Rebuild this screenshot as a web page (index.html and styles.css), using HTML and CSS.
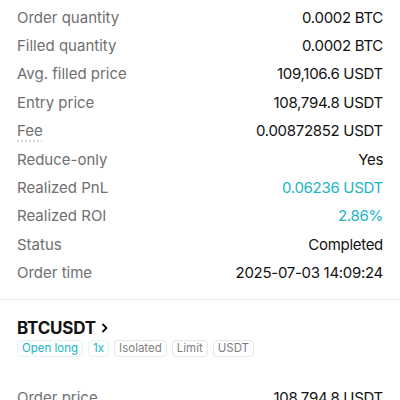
FILE: index.html
```html
<!DOCTYPE html>
<html>
<head>
<meta charset="utf-8">
<link rel="stylesheet" href="styles.css">
</head>
<body>
<div class="page">
  <section class="details">
    <div class="row"><span class="label">Order quantity</span><span class="value">0.0002 BTC</span></div>
    <div class="row"><span class="label">Filled quantity</span><span class="value">0.0002 BTC</span></div>
    <div class="row"><span class="label">Avg. filled price</span><span class="value">109,106.6 USDT</span></div>
    <div class="row"><span class="label">Entry price</span><span class="value">108,794.8 USDT</span></div>
    <div class="row"><span class="label dotted">Fee</span><span class="value">0.00872852 USDT</span></div>
    <div class="row"><span class="label">Reduce-only</span><span class="value">Yes</span></div>
    <div class="row"><span class="label">Realized PnL</span><span class="value up">0.06236 USDT</span></div>
    <div class="row"><span class="label">Realized ROI</span><span class="value up">2.86%</span></div>
    <div class="row"><span class="label">Status</span><span class="value">Completed</span></div>
    <div class="row"><span class="label">Order time</span><span class="value">2025-07-03 14:09:24</span></div>
  </section>
  <section class="order">
    <div class="title">BTCUSDT
      <svg class="chev" width="8" height="10" viewBox="0 0 8 10"><path d="M2 1.5 L5.5 5 L2 8.5" fill="none" stroke="#111" stroke-width="1.8" stroke-linecap="round" stroke-linejoin="round"/></svg>
    </div>
    <div class="tags">
      <span class="tag accent">Open long</span>
      <span class="tag accent">1x</span>
      <span class="tag">Isolated</span>
      <span class="tag">Limit</span>
      <span class="tag">USDT</span>
    </div>
    <div class="rows">
      <div class="row"><span class="label">Order price</span><span class="value">108,794.8 USDT</span></div>
    </div>
  </section>
</div>
</body>
</html>
```
FILE: styles.css
```css
* { box-sizing: border-box; }
html, body { margin: 0; background: #fff; }
body {
  font-family: Inter, "Noto Sans", sans-serif;
  color: #121212;
  overflow: hidden;
}
.page { width: 400px; }
.details {
  padding: 3px 17px 12px 17px;
  border-bottom: 1px solid #eeeeee;
}
.row {
  display: flex;
  justify-content: space-between;
  align-items: center;
  height: 28.4px;
  font-size: 15px;
}
.label { color: #6f6f6f; }
.label.dotted {
  text-decoration: underline dotted #c4c4c4;
  text-underline-offset: 4px;
}
.value { color: #121212; letter-spacing: -0.3px; }
.value.up { color: #20b4c8; }
.order { padding: 17px 17px 0 17px; }
.title {
  display: flex;
  align-items: center;
  gap: 5px;
  font-size: 17px;
  font-weight: 700;
  line-height: 22px;
  letter-spacing: -0.2px;
}
.chev { margin-top: 1px; }
.tags {
  display: flex;
  gap: 5px;
  margin-top: 1px;
}
.tag {
  font-size: 11.5px;
  line-height: 15px;
  padding: 0 4px;
  border: 1px solid #e6e6e6;
  border-radius: 4px;
  color: #808080;
}
.tag.accent { color: #20b4c8; border-color: #e3f3f5; }
.rows { margin-top: 26px; }
```
